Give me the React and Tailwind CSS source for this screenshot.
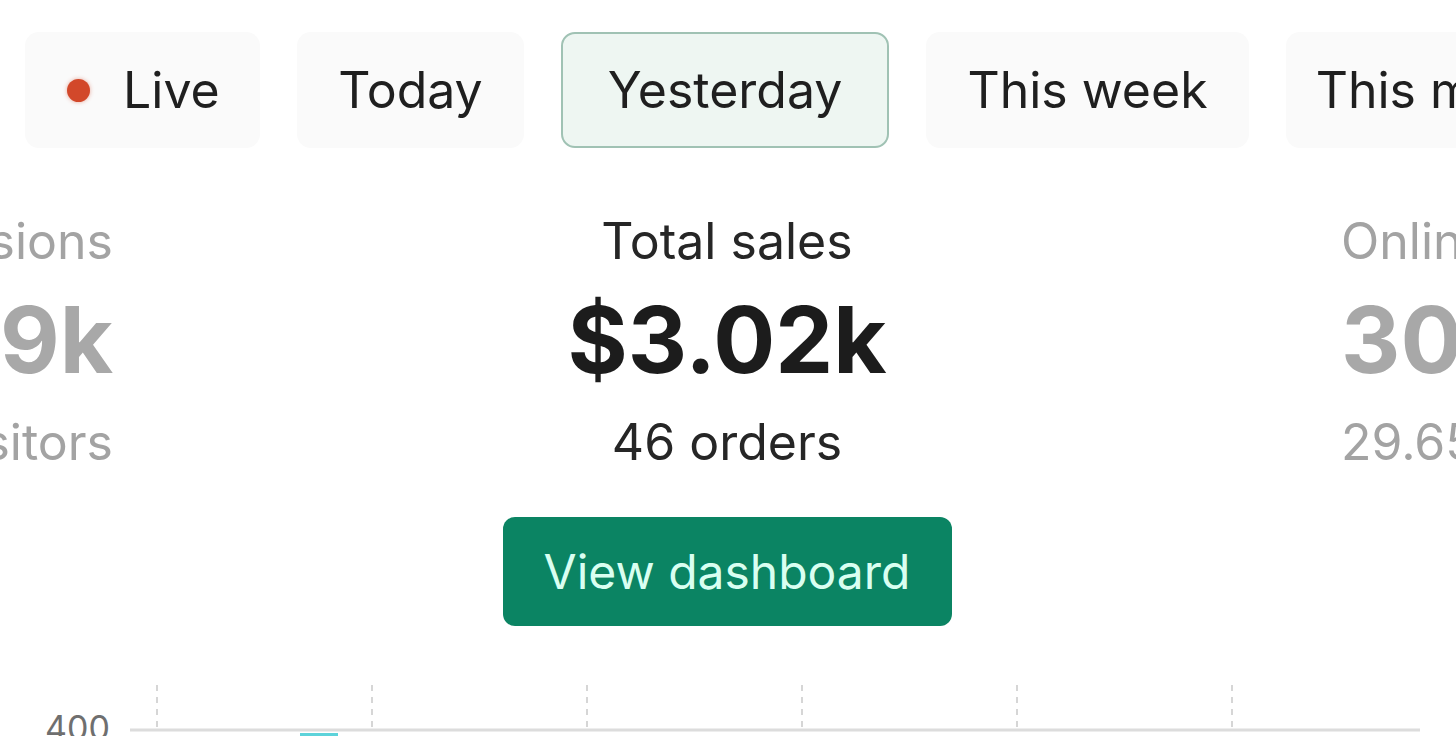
import React from "react";

function Chip({ children, w, selected, live }) {
  return (
    <div
      className={
        "shrink-0 h-[116px] rounded-[14px] flex items-center text-[50px] leading-[60px] text-[#1f1f1f] " +
        (live ? "justify-start pl-[42px] gap-[33px] " : "justify-center ") +
        (selected
          ? "bg-[#eef6f2] border-2 border-[#a0c2b4]"
          : "bg-[#fafafa]")
      }
      style={{ width: w }}
    >
      {live && (
        <span className="w-[23px] h-[23px] rounded-full bg-[#d2482a] shadow-[0_0_4px_rgba(210,72,42,0.45)]" />
      )}
      <span className="whitespace-nowrap">{children}</span>
    </div>
  );
}

export default function App() {
  const grid = [157, 372, 587, 802, 1017, 1232];
  return (
    <div
      className="w-[1456px] h-[736px] overflow-hidden bg-white relative"
      style={{ fontFamily: "Inter, 'Liberation Sans', sans-serif" }}
    >
      {/* Chips row */}
      <div className="flex items-center pt-[32px] pl-[25px] gap-[37px] whitespace-nowrap">
        <Chip w={235} live>Live</Chip>
        <Chip w={227}>Today</Chip>
        <Chip w={328} selected>Yesterday</Chip>
        <Chip w={323}>This week</Chip>
        <Chip w={323}>This month</Chip>
      </div>

      {/* Stats */}
      <div className="flex mt-[63px]">
        <div className="w-[113px] shrink-0 overflow-hidden flex flex-col items-end text-[#a3a3a3] whitespace-nowrap">
          <div className="text-[50px] leading-[60px]">Sessions</div>
          <div className="mt-[25px] text-[92px] leading-[88px] font-bold text-[#a8a8a8]">4.19k</div>
          <div className="mt-[28px] text-[50px] leading-[60px]">3.89k visitors</div>
        </div>
        <div className="w-[1228px] shrink-0 flex flex-col items-center">
          <div className="text-[50px] leading-[60px] text-[#262626]">Total sales</div>
          <div className="mt-[25px] text-[92px] leading-[88px] font-bold text-[#1c1c1c]">$3.02k</div>
          <div className="mt-[28px] text-[50px] leading-[60px] text-[#262626]">46 orders</div>
          <button className="mt-[45px] w-[449px] h-[109px] rounded-[12px] bg-[#0b8463] text-[#d9fff1] text-[48px] leading-[60px] flex items-center justify-center">
            View dashboard
          </button>
        </div>
        <div className="flex-1 overflow-hidden flex flex-col items-start text-[#a3a3a3] whitespace-nowrap">
          <div className="text-[50px] leading-[60px]">Online store sessions</div>
          <div className="mt-[25px] text-[92px] leading-[88px] font-bold text-[#a8a8a8]">30.3k</div>
          <div className="mt-[28px] text-[50px] leading-[60px]">29.65k visitors</div>
        </div>
      </div>

      {/* Chart */}
      <div className="absolute left-0 top-[640px] w-[1456px] h-[96px]">
        <svg width="1456" height="96" className="absolute left-0 top-0">
          {grid.map((x) => (
            <line
              key={x}
              x1={x}
              x2={x}
              y1={45}
              y2={90}
              stroke="#d6d6d6"
              strokeWidth="2"
              strokeDasharray="6 6"
            />
          ))}
          <line x1="130" x2="1420" y1="90" y2="90" stroke="#dcdcdc" strokeWidth="3" />
          <rect x="300" y="93" width="38" height="4" fill="#5dd3da" />
        </svg>
        <div className="absolute left-[45px] top-[68px] text-[34px] leading-[40px] text-[#6f6f6f]">400</div>
      </div>
    </div>
  );
}
